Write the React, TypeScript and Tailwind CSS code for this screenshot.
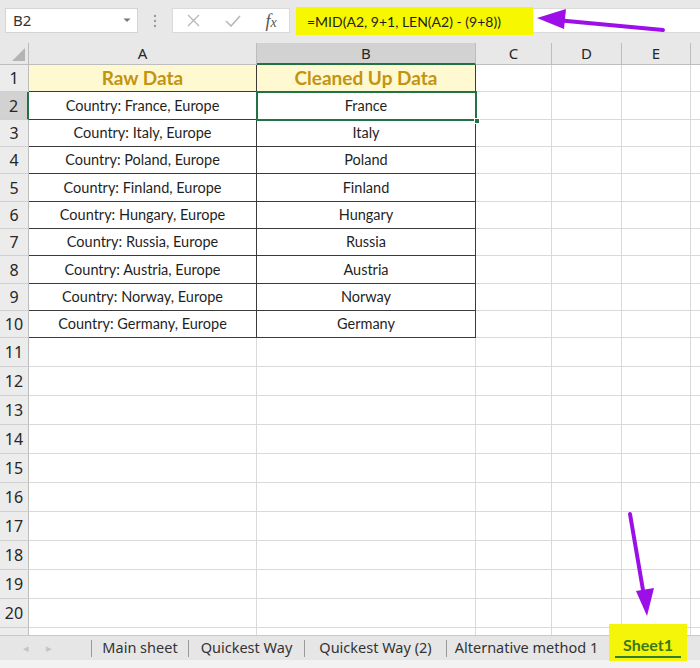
import React from "react";

const raw = [
  "Country: France, Europe",
  "Country: Italy, Europe",
  "Country: Poland, Europe",
  "Country: Finland, Europe",
  "Country: Hungary, Europe",
  "Country: Russia, Europe",
  "Country: Austria, Europe",
  "Country: Norway, Europe",
  "Country: Germany, Europe",
];
const clean = ["France", "Italy", "Poland", "Finland", "Hungary", "Russia", "Austria", "Norway", "Germany"];
const topHeights = [27, 28, 27, 27, 28, 27, 27, 28, 27, 27];

const cellFont = { fontFamily: "Lato, 'Open Sans', sans-serif" };
const uiFont = { fontFamily: "'Noto Sans', 'Open Sans', sans-serif" };

function RowHeader({ n, h, active }: { n: number | string; h: number; active?: boolean }) {
  return (
    <div
      className={`w-[29px] shrink-0 flex items-center justify-center text-[16px] text-[#262626] border-b border-[#d0d0d0] ${
        active ? "bg-[#d2d2d2] border-r-2 border-r-[#217346]" : "bg-[#ececec] border-r border-r-[#bdbdbd]"
      }`}
      style={{ height: h, ...uiFont }}
    >
      {n}
    </div>
  );
}

function EmptyCells({ h }: { h: number }) {
  return (
    <>
      <div className="w-[76px] shrink-0 border-r border-b border-[#d9d9d9] bg-white" style={{ height: h }} />
      <div className="w-[70px] shrink-0 border-r border-b border-[#d9d9d9] bg-white" style={{ height: h }} />
      <div className="w-[69px] shrink-0 border-r border-b border-[#d9d9d9] bg-white" style={{ height: h }} />
      <div className="flex-1 border-b border-[#d9d9d9] bg-white" style={{ height: h }} />
    </>
  );
}

function Sep() {
  return <div className="w-px h-[17px] bg-[#9a9a9a] shrink-0" />;
}

export default function App() {
  return (
    <div className="relative w-[700px] h-[668px] overflow-hidden bg-[#e8e8e8] flex flex-col">
      {/* Formula bar */}
      <div className="h-[43px] shrink-0 flex items-start pt-[8px] pl-[5px]">
        <div
          className="w-[133px] h-[25px] bg-white border border-[#d4d4d4] flex items-center justify-between pl-[7px] pr-[6px] text-[15px] text-[#333]"
          style={uiFont}
        >
          <span>B2</span>
          <svg width="8" height="5" viewBox="0 0 8 5">
            <path d="M0.5 0.5 L4 4 L7.5 0.5 Z" fill="#777" />
          </svg>
        </div>
        <div className="w-[34px] h-[25px] flex items-center justify-center">
          <svg width="4" height="14" viewBox="0 0 4 14">
            <circle cx="2" cy="2" r="1.2" fill="#9a9a9a" />
            <circle cx="2" cy="7" r="1.2" fill="#9a9a9a" />
            <circle cx="2" cy="12" r="1.2" fill="#9a9a9a" />
          </svg>
        </div>
        <div className="w-[118px] h-[25px] bg-white border border-[#dadada] flex items-center">
          <div className="w-[40px] flex justify-center">
            <svg width="13" height="13" viewBox="0 0 13 13">
              <path d="M1 1 L12 12 M12 1 L1 12" stroke="#b8b8b8" strokeWidth="1.3" />
            </svg>
          </div>
          <div className="w-[40px] flex justify-center">
            <svg width="16" height="12" viewBox="0 0 16 12">
              <path d="M1 6 L6 11 L15 1" stroke="#b8b8b8" strokeWidth="1.6" fill="none" />
            </svg>
          </div>
          <div
            className="w-[36px] flex items-baseline justify-center text-[18px] leading-none text-[#555] italic"
            style={{ fontFamily: "'Liberation Serif', serif" }}
          >
            <span>f</span>
            <span className="text-[14px]">x</span>
          </div>
        </div>
        <div className="flex-1 ml-[6px] h-[25px] bg-white border-y border-[#dadada] relative">
          <div
            className="absolute left-0 top-[-2px] w-[237px] h-[28px] bg-[#f7f700] flex items-center pl-[11px] text-[14px] text-[#1f1f1f]"
            style={cellFont}
          >
            =MID(A2, 9+1, LEN(A2) - (9+8))
          </div>
        </div>
      </div>

      {/* Column headers */}
      <div className="h-[22px] shrink-0 flex text-[15px] text-[#262626]" style={uiFont}>
        <div className="w-[29px] shrink-0 border-r border-b border-[#bdbdbd] bg-[#e8e8e8] relative">
          <svg className="absolute right-[3px] bottom-[3px]" width="13" height="13" viewBox="0 0 13 13">
            <path d="M13 0 L13 13 L0 13 Z" fill="#b4b4b4" />
          </svg>
        </div>
        <div className="w-[228px] shrink-0 flex items-center justify-center border-r border-b border-[#bdbdbd] bg-[#e8e8e8]">A</div>
        <div className="w-[219px] shrink-0 flex items-center justify-center border-r border-[#bdbdbd] border-b-2 border-b-[#217346] bg-[#d2d2d2]">
          B
        </div>
        <div className="w-[76px] shrink-0 flex items-center justify-center border-r border-b border-[#bdbdbd] bg-[#e8e8e8]">C</div>
        <div className="w-[70px] shrink-0 flex items-center justify-center border-r border-b border-[#bdbdbd] bg-[#e8e8e8]">D</div>
        <div className="w-[69px] shrink-0 flex items-center justify-center border-r border-b border-[#bdbdbd] bg-[#e8e8e8]">E</div>
        <div className="flex-1 border-b border-[#bdbdbd] bg-[#e8e8e8]" />
      </div>

      {/* Grid */}
      <div className="flex-1 relative bg-white overflow-hidden">
        {/* Row 1 */}
        <div className="flex">
          <RowHeader n={1} h={topHeights[0]} />
          <div
            className="w-[228px] shrink-0 bg-[#fff9d2] border-r border-b border-[#3a3a3a] flex items-center justify-center text-[19px] font-bold text-[#c49310]"
            style={{ height: topHeights[0], ...cellFont }}
          >
            Raw Data
          </div>
          <div
            className="w-[219px] shrink-0 bg-[#fff9d2] border-r border-b border-[#3a3a3a] flex items-center justify-center text-[19px] font-bold text-[#c49310]"
            style={{ height: topHeights[0], ...cellFont }}
          >
            Cleaned Up Data
          </div>
          <EmptyCells h={topHeights[0]} />
        </div>
        {raw.map((r, i) => {
          const h = topHeights[i + 1];
          return (
            <div className="flex" key={r}>
              <RowHeader n={i + 2} h={h} active={i === 0} />
              <div
                className="w-[228px] shrink-0 border-r border-b border-[#3a3a3a] flex items-center justify-center text-[14.5px] text-[#1f1f1f]"
                style={{ height: h, ...cellFont }}
              >
                {r}
              </div>
              <div
                className="w-[219px] shrink-0 border-r border-b border-[#3a3a3a] flex items-center justify-center text-[14.5px] text-[#1f1f1f]"
                style={{ height: h, ...cellFont }}
              >
                {clean[i]}
              </div>
              <EmptyCells h={h} />
            </div>
          );
        })}
        {Array.from({ length: 11 }).map((_, i) => {
          const h = 29;
          return (
            <div className="flex" key={i}>
              <RowHeader n={i + 11 <= 20 ? i + 11 : ""} h={h} />
              <div className="w-[228px] shrink-0 border-r border-b border-[#d9d9d9]" style={{ height: h }} />
              <div className="w-[219px] shrink-0 border-r border-b border-[#d9d9d9]" style={{ height: h }} />
              <EmptyCells h={h} />
            </div>
          );
        })}
        {/* Selection B2 */}
        <div className="absolute left-[256px] top-[26px] w-[221px] h-[30px] border-2 border-[#217346]" />
        <div className="absolute left-[474px] top-[53px] w-[6px] h-[6px] bg-[#217346] border border-white" />
      </div>

      {/* Sheet tabs */}
      <div
        className="h-[25px] shrink-0 bg-[#e6e6e6] border-t border-[#c8c8c8] flex items-center text-[14.5px] text-[#333] whitespace-nowrap"
        style={uiFont}
      >
        <div className="w-[91px] shrink-0 flex items-center pl-[23px] gap-[17px] text-[#c4c4c4] text-[11px]">
          <span>◂</span>
          <span>▸</span>
        </div>
        <Sep />
        <div className="w-[96px] shrink-0 text-center">Main sheet</div>
        <Sep />
        <div className="w-[115px] shrink-0 text-center">Quickest Way</div>
        <Sep />
        <div className="w-[141px] shrink-0 text-center">Quickest Way (2)</div>
        <Sep />
        <div className="w-[159px] shrink-0 text-center">Alternative method 1</div>
        <div className="relative w-[80px] shrink-0 self-stretch">
          <div className="absolute left-[3px] top-[-12px] w-[78px] h-[37px] bg-[#f5f50a] flex items-end justify-center pb-[3px]">
            <div
              className="w-[66px] h-[25px] border-b-2 border-[#2e7d32] flex items-center justify-center text-[16px] font-bold text-[#3b7a16]"
              style={cellFont}
            >
              Sheet1
            </div>
          </div>
        </div>
      </div>
      <div className="h-[8px] shrink-0 bg-[#f2f2f2]" />

      {/* Arrows */}
      <svg className="absolute left-0 top-0 pointer-events-none" width="700" height="668" viewBox="0 0 700 668">
        <line x1="663" y1="30" x2="556" y2="20" stroke="#9d0fe8" strokeWidth="4" strokeLinecap="round" />
        <path d="M537 18 L566 9 L564 29 Z" fill="#9d0fe8" />
        <line x1="630" y1="514" x2="644" y2="596" stroke="#9d0fe8" strokeWidth="4" strokeLinecap="round" />
        <path d="M647 616 L636 591 L654 588 Z" fill="#9d0fe8" />
      </svg>
    </div>
  );
}
